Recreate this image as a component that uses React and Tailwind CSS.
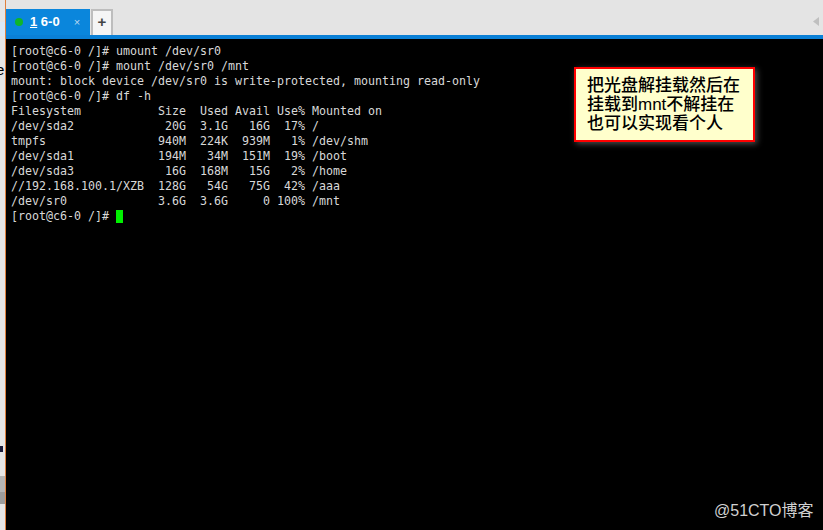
const lines = [
  "[root@c6-0 /]# umount /dev/sr0",
  "[root@c6-0 /]# mount /dev/sr0 /mnt",
  "mount: block device /dev/sr0 is write-protected, mounting read-only",
  "[root@c6-0 /]# df -h",
  "Filesystem           Size  Used Avail Use% Mounted on",
  "/dev/sda2             20G  3.1G   16G  17% /",
  "tmpfs                940M  224K  939M   1% /dev/shm",
  "/dev/sda1            194M   34M  151M  19% /boot",
  "/dev/sda3             16G  168M   15G   2% /home",
  "//192.168.100.1/XZB  128G   54G   75G  42% /aaa",
  "/dev/sr0             3.6G  3.6G     0 100% /mnt",
];

export default function App() {
  return (
    <div className="flex w-[823px] h-[530px] overflow-hidden bg-black">
      <div className="relative w-[5px] shrink-0 bg-[#e6e6e6] overflow-hidden">
        <div className="absolute left-0 top-[22px] w-[5px] h-[14px] bg-[#dce9f5]" />
        <div className="absolute left-0 top-[476px] w-[5px] h-[16px] bg-[#b5b5b5]" />
        <div className="absolute left-0 top-[492px] w-[5px] h-[12px] bg-[#9c9c9c]" />
        <div className="absolute left-0 top-[446px] w-[3px] h-[6px] bg-[#1b1b3a]" />
        <span className="absolute left-[-4px] top-[60px] text-[15px] leading-5 text-black font-['Liberation_Sans',sans-serif]">e</span>
      </div>
      <div className="w-px shrink-0 bg-[#e0803c]" />
      <div className="flex-1 flex flex-col min-w-0">
        <div className="h-[39px] shrink-0 flex flex-col bg-[#e4e4e4]">
          <div className="flex-1 flex items-end pt-[9px] relative">
            <div className="w-[84px] h-[26px] bg-[#0a86dc] flex items-center pl-[9px] text-white font-['Liberation_Sans',sans-serif]">
              <span className="w-[8px] h-[8px] rounded-full bg-[#0fb52a] mr-[7px]" />
              <span className="text-[13px] font-bold"><span className="underline">1</span> 6-0</span>
              <span className="ml-[14px] text-[11px] text-[#bcd9f0]">×</span>
            </div>
            <div className="ml-[1px] w-[22px] h-[26px] bg-[#f5f5f5] border-2 border-b-0 border-[#bdbdbd] flex items-center justify-center pb-[3px] text-[15px] leading-none font-bold text-[#444] font-['Liberation_Sans',sans-serif]">+</div>
            <svg className="absolute right-[4px] top-[17px]" width="6" height="9" viewBox="0 0 6 9"><polygon points="6,0 6,9 0,4.5" fill="#bfbfbf" /></svg>
          </div>
          <div className="h-[4px] bg-[#0a80d6]" />
        </div>
        <div className="relative flex-1 pl-[5px] pt-[5px] bg-black">
          <pre className="font-['DejaVu_Sans_Mono',monospace] text-[11.63px] leading-[15px] text-[#d8d8d8]">
            {lines.map((l) => <div key={l}>{l}</div>)}
            <div className="flex items-center">[root@c6-0 /]#&nbsp;<span className="w-[7px] h-[13px] bg-[#00f000]" /></div>
          </pre>
          <div className="absolute left-[568px] top-[28px] w-[181px] h-[75px] bg-[#ffffcc] border-[2px] border-[#ff0000] shadow-[2px_2px_6px_rgba(255,255,255,0.3)] pl-[11px] pt-[7px] text-[17px] leading-[19px] font-medium text-black font-['Liberation_Sans','Noto_Sans_CJK_SC',sans-serif]">
            把光盘解挂载然后在<br />挂载到mnt不解挂在<br />也可以实现看个人
          </div>
          <div className="absolute left-[708px] top-[462px] text-[16px] leading-5 text-[#d0d0d0] font-['Liberation_Sans','Noto_Sans_CJK_SC',sans-serif]">@51CTO博客</div>
        </div>
      </div>
    </div>
  );
}
